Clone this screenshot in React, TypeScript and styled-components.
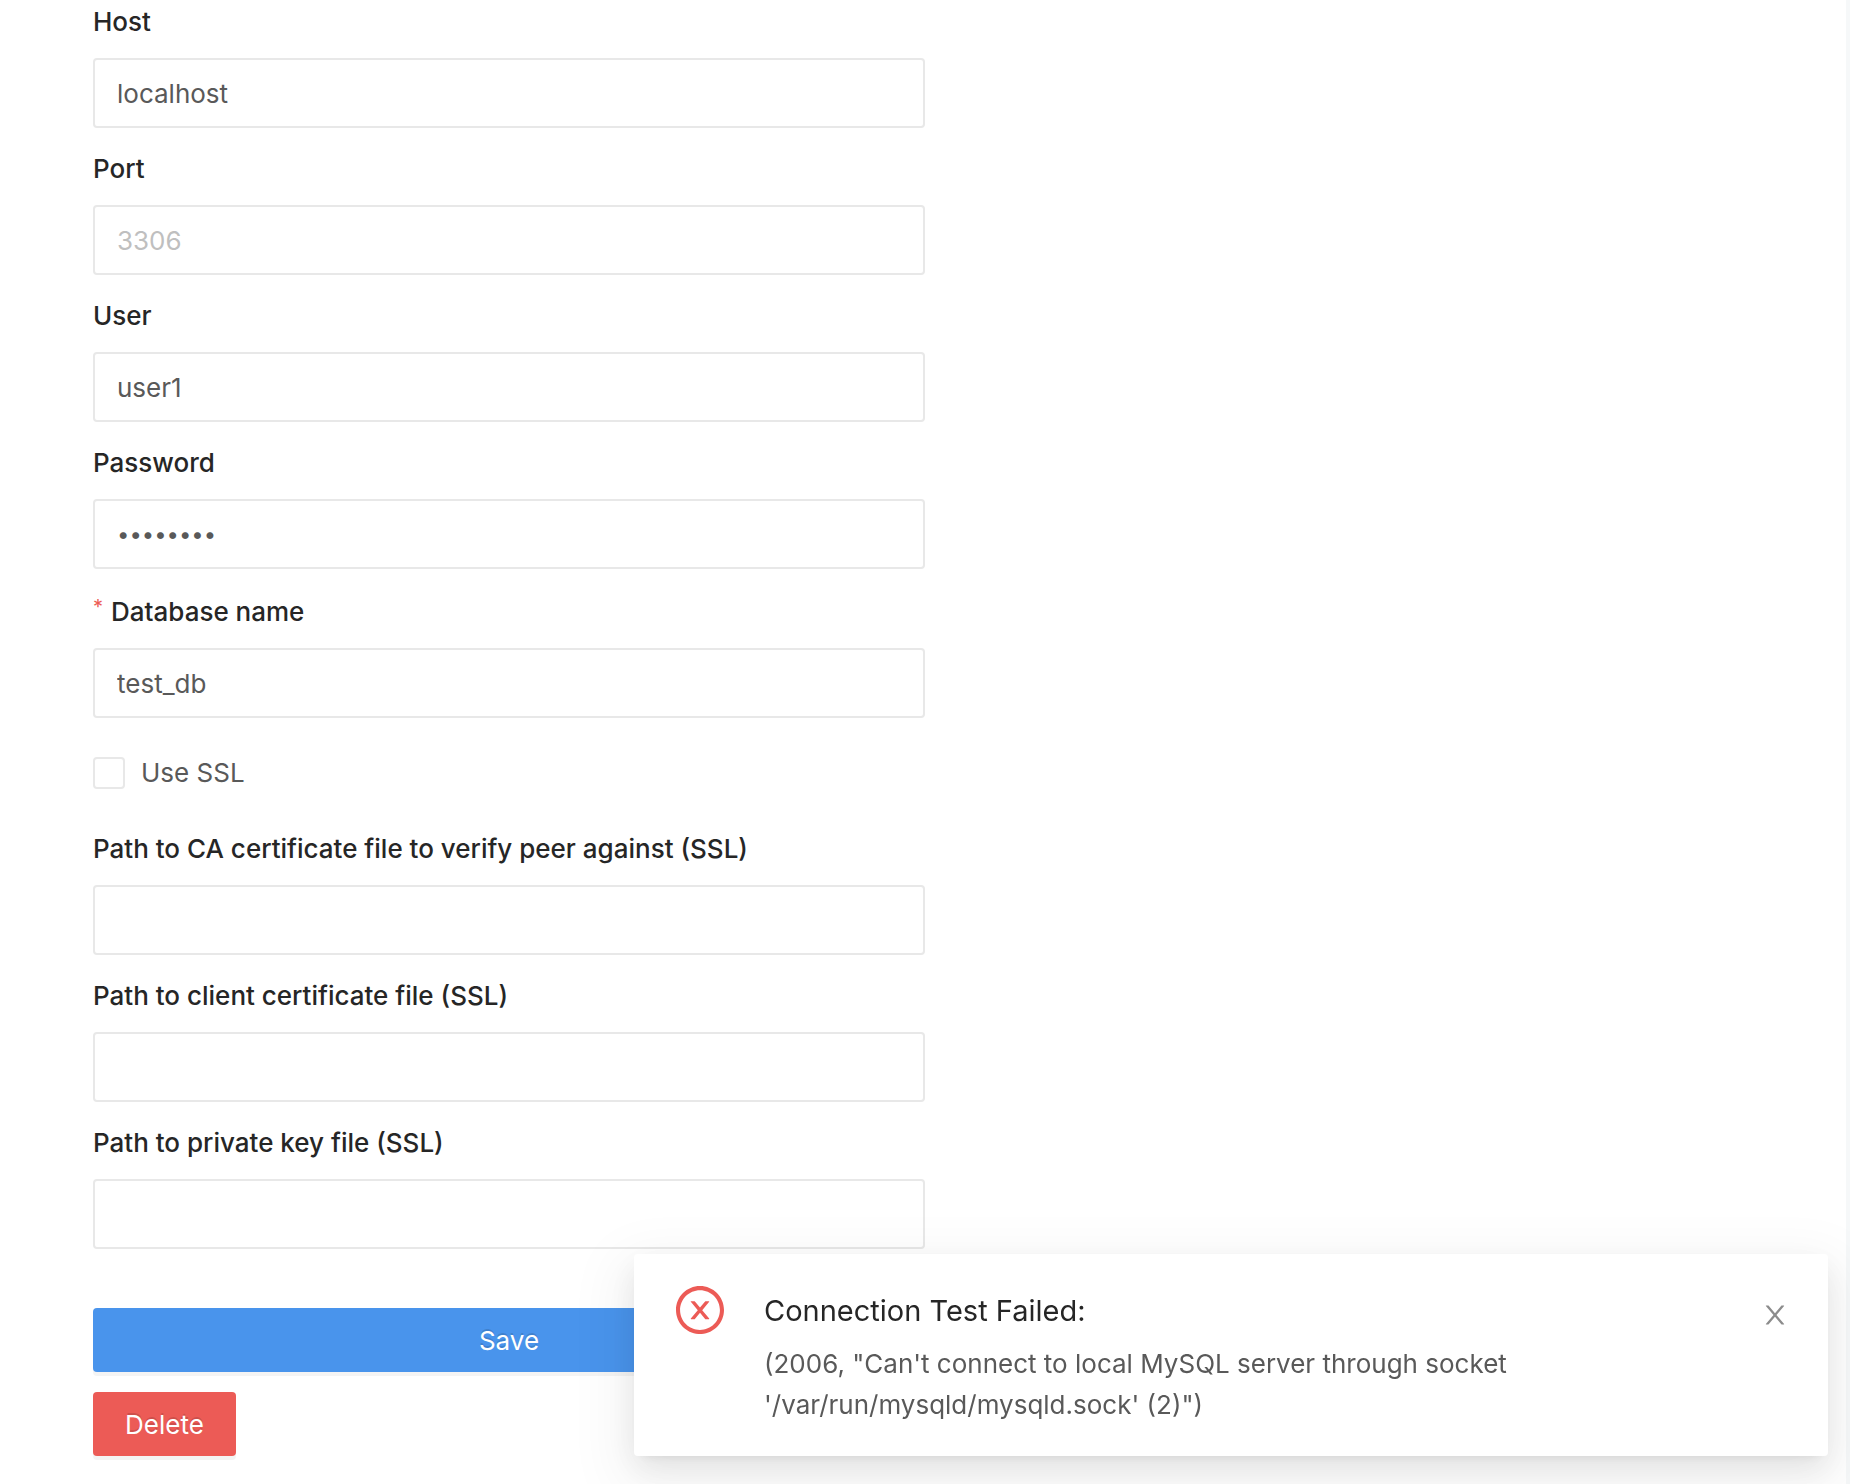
import React, { useState } from "react";
import styled, { createGlobalStyle } from "styled-components";

const GlobalStyle = createGlobalStyle`
  *, *::before, *::after { box-sizing: border-box; }
  body {
    margin: 0;
    background: #f6f8f9;
    color: #595959;
    font-family: Inter, Roboto, "Liberation Sans", sans-serif;
    font-size: 26px;
    line-height: 40px;
  }
  button, input { font: inherit; }
`;

const Page = styled.main`
  min-height: 100vh;
  margin-right: 4px;
  padding: 2px 24px 28px 93px;
  background: #fff;
`;

const Form = styled.form`
  display: flex;
  flex-direction: column;
  max-width: 832px;
`;

const Fields = styled.div`
  display: flex;
  flex-direction: column;
  gap: 21px;
`;

const Field = styled.div`
  display: flex;
  flex-direction: column;
  gap: 16px;
`;

const Label = styled.label<{ $required?: boolean }>`
  display: flex;
  align-items: flex-end;
  gap: 8px;
  height: ${(p) => (p.$required ? 42 : 40)}px;
  color: #262626;
  font-weight: 500;
`;

const Asterisk = styled.span`
  align-self: flex-start;
  color: #ec5b56;
  font-size: 20px;
  font-weight: 400;
  line-height: 34px;
`;

const Input = styled.input`
  width: 100%;
  height: 70px;
  padding: 0 22px;
  border: 2px solid #e8e8e8;
  border-radius: 4px;
  background: #fff;
  color: #595959;
  outline: none;

  &::placeholder { color: #bfbfbf; opacity: 1; }
  &:focus-visible { border-color: #4994ec; }
  &[type="password"] { font-size: 22px; }
`;

const CheckRow = styled.label`
  display: flex;
  align-items: center;
  gap: 16px;
  margin: 35px 0 36px;
`;

const Checkbox = styled.input`
  appearance: none;
  width: 32px;
  height: 32px;
  margin: 0;
  border: 2px solid #e8e8e8;
  border-radius: 4px;
  background: #fff;

  &:checked { border-color: #4994ec; background: #4994ec; }
`;

const Actions = styled.div`
  display: flex;
  flex-direction: column;
  align-items: flex-start;
  gap: 20px;
  margin-top: 59px;
`;

const Button = styled.button<{ $color: string; $block?: boolean }>`
  width: ${(p) => (p.$block ? "100%" : "auto")};
  height: 64px;
  padding: 2px 32px 0;
  border: 0;
  border-radius: 4px;
  background: ${(p) => p.$color};
  box-shadow: 0 4px 0 rgba(0, 0, 0, 0.045);
  color: #fff;
  text-shadow: 0 -2px 0 rgba(0, 0, 0, 0.12);
  cursor: pointer;
`;

const Toast = styled.aside`
  position: fixed;
  right: 22px;
  bottom: 28px;
  display: flex;
  align-items: flex-start;
  width: 1194px;
  max-width: calc(100vw - 44px);
  padding: 32px 40px 31px 42px;
  border-radius: 4px;
  background: #fff;
  box-shadow:
    0 6px 12px -8px rgba(0, 0, 0, 0.12),
    0 12px 32px rgba(0, 0, 0, 0.08),
    0 18px 56px 16px rgba(0, 0, 0, 0.05);
`;

const ToastBody = styled.div`
  flex: 1;
  padding: 5px 200px 0 40px;
`;

const ToastTitle = styled.h2`
  margin: 0 0 12px;
  color: #262626;
  font-size: 29px;
  font-weight: 400;
  line-height: 40px;
`;

const ToastText = styled.p`
  margin: 0;
  line-height: 41px;
`;

const CloseButton = styled.button`
  display: flex;
  margin-top: 16px;
  padding: 0;
  border: 0;
  background: none;
  color: #8c8c8c;
  cursor: pointer;
`;

const ErrorIcon = styled.svg`
  flex: none;
  width: 48px;
  height: 48px;
  color: #ec5b56;
`;

type FieldProps = {
  id: string;
  label: string;
  type?: string;
  value?: string;
  placeholder?: string;
  required?: boolean;
};

function TextField({ id, label, type = "text", value = "", placeholder, required }: FieldProps) {
  return (
    <Field>
      <Label htmlFor={id} $required={required}>
        {required && <Asterisk aria-hidden="true">*</Asterisk>}
        {label}
      </Label>
      <Input id={id} type={type} defaultValue={value} placeholder={placeholder} required={required} />
    </Field>
  );
}

export default function App() {
  const [toastOpen, setToastOpen] = useState(true);

  return (
    <>
      <GlobalStyle />
      <Page>
        <Form onSubmit={(e) => e.preventDefault()}>
          <Fields>
            <TextField id="host" label="Host" value="localhost" />
            <TextField id="port" label="Port" placeholder="3306" />
            <TextField id="user" label="User" value="user1" />
            <TextField id="password" label="Password" type="password" value="password" />
            <TextField id="db" label="Database name" value="test_db" required />
          </Fields>
          <CheckRow>
            <Checkbox type="checkbox" />
            Use SSL
          </CheckRow>
          <Fields>
            <TextField id="ssl-ca" label="Path to CA certificate file to verify peer against (SSL)" />
            <TextField id="ssl-cert" label="Path to client certificate file (SSL)" />
            <TextField id="ssl-key" label="Path to private key file (SSL)" />
          </Fields>
          <Actions>
            <Button type="submit" $color="#4994ec" $block>Save</Button>
            <Button type="button" $color="#ec5b56">Delete</Button>
          </Actions>
        </Form>
      </Page>
      {toastOpen && (
        <Toast role="alert">
          <ErrorIcon viewBox="64 64 896 896" fill="currentColor" aria-hidden="true">
            <path d="M685.4 354.8c0-4.4-3.6-8-8-8l-66 .3L512 465.6l-99.3-118.4-66.1-.3c-4.4 0-8 3.5-8 8 0 1.9.7 3.7 1.9 5.2l130.1 155L340.5 670a8.32 8.32 0 0 0-1.9 5.2c0 4.4 3.6 8 8 8l66.1-.3L512 564.4l99.3 118.4 66 .3c4.4 0 8-3.5 8-8 0-1.9-.7-3.7-1.9-5.2L553.5 515l130.1-155c1.2-1.4 1.8-3.3 1.8-5.2z" />
            <path d="M512 65C264.6 65 64 265.6 64 513s200.6 448 448 448 448-200.6 448-448S759.4 65 512 65zm0 820c-205.4 0-372-166.6-372-372s166.6-372 372-372 372 166.6 372 372-166.6 372-372 372z" />
          </ErrorIcon>
          <ToastBody>
            <ToastTitle>Connection Test Failed:</ToastTitle>
            <ToastText>
              (2006, "Can't connect to local MySQL server through socket '/var/run/mysqld/mysqld.sock' (2)")
            </ToastText>
          </ToastBody>
          <CloseButton type="button" aria-label="Close" onClick={() => setToastOpen(false)}>
            <svg width="26" height="26" viewBox="64 64 896 896" fill="currentColor" aria-hidden="true">
              <path d="M563.8 512l262.5-312.9c4.4-5.2.7-13.1-6.1-13.1h-79.8c-4.7 0-9.2 2.1-12.3 5.7L511.6 449.8 295.1 191.7c-3-3.6-7.5-5.7-12.3-5.7H203c-6.8 0-10.5 7.9-6.1 13.1L459.4 512 196.9 824.9A7.95 7.95 0 0 0 203 838h79.8c4.7 0 9.2-2.1 12.3-5.7l216.5-258.1 216.5 258.1c3 3.6 7.5 5.7 12.3 5.7h79.8c6.8 0 10.5-7.9 6.1-13.1L563.8 512z" />
            </svg>
          </CloseButton>
        </Toast>
      )}
    </>
  );
}
